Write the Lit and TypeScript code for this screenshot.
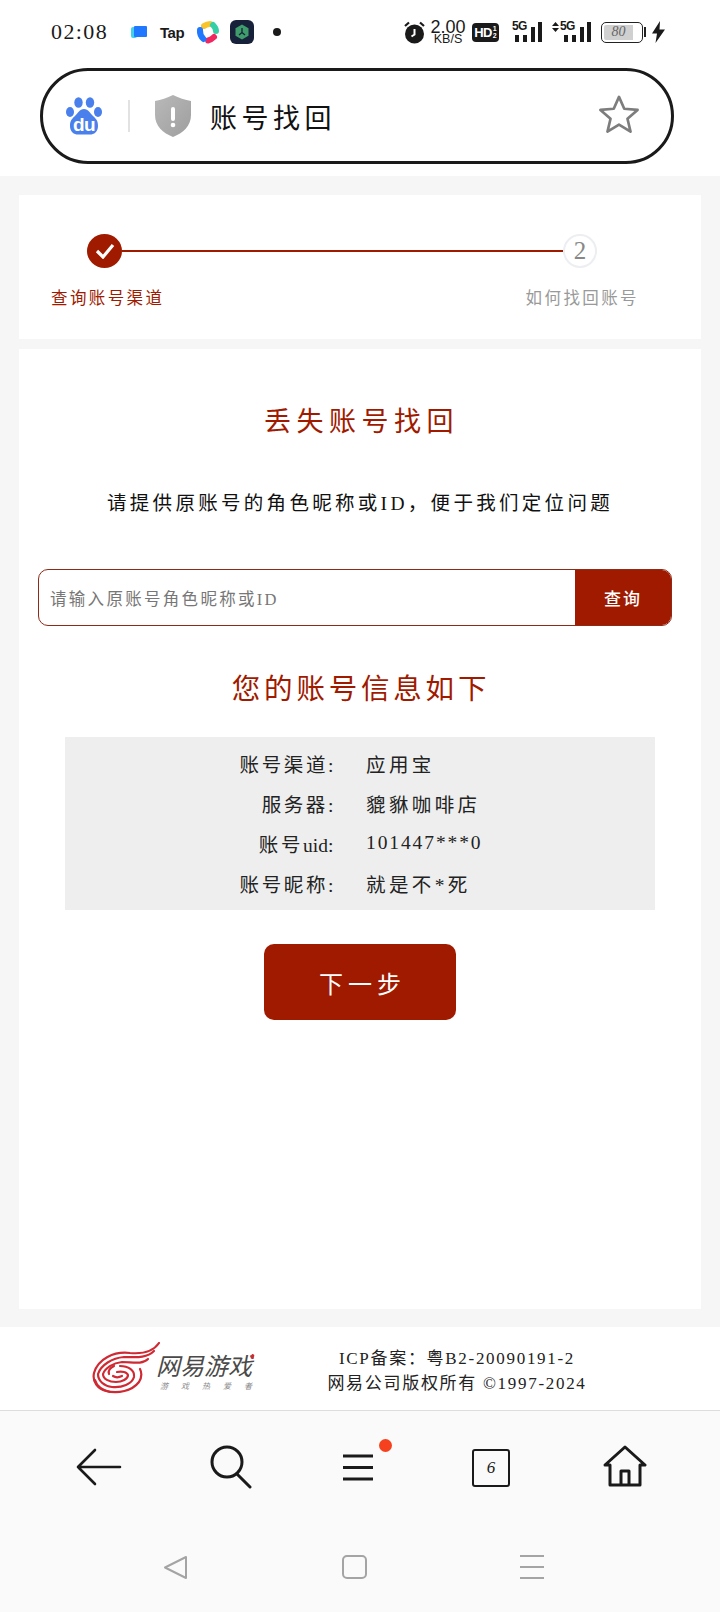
import { LitElement, html, css, svg } from "lit";
import { customElement } from "lit/decorators.js";

const swirl = svg`<svg class="swirl" width="68" height="52" viewBox="0 0 68 52" fill="none" stroke="#cf2a33" stroke-width="2.200" stroke-linecap="round">
  <path d="M67 1C61 10 50 12 38 11C22 9 6 17 2 31C0 40 6 47 14 49C26 52 40 49 47 40C50 35 50 31 48 27"/>
  <path d="M62 9C54 17 42 15 32 15C20 16 9 23 6 32C6 39 12 44 20 45C30 46 40 42 42 35C43 28 36 24 28 24"/>
  <path d="M56 17C50 23 40 20 30 20C21 21 13 26 11 32C11 37 17 40 24 40C30 40 36 37 36 33C35 30 30 29 25 30"/>
  <path d="M22 24C18 26 16 29 17 32M21 34C24 36 28 35 30 34"/>
  <path d="M3 38C5 45 10 48 18 50"/>
</svg>`;

@customElement("app-root")
export class AppRoot extends LitElement {
  static styles = css`
    :host { --red: #a01a00; display: block; width: 720px; height: 1612px; overflow: hidden; background: #f6f6f6;
      font-family: "Liberation Serif", "Noto Sans CJK SC", serif; color: #1a1a1a; }
    * { box-sizing: border-box; }
    svg { display: block; flex: none; }
    .top { background: #fff; height: 176px; display: flex; flex-direction: column; }
    .status { height: 68px; display: flex; align-items: center; padding: 0 55px 4px 51px; }
    .time { font-size: 22px; letter-spacing: 1.400px; width: 77px; }
    .apps { display: flex; align-items: center; }
    .tapt { font: 700 15px "Liberation Sans", sans-serif; letter-spacing: -0.500px; width: 24px; margin: 0 12px 0 12px; white-space: nowrap; }
    .sright { margin-left: auto; display: flex; align-items: center; }
    .speed { display: flex; flex-direction: column; align-items: center; width: 32px; font-family: "Liberation Sans", sans-serif; margin: 0 8px 0 7px; padding-top: 1px; }
    .speed b { font-weight: 400; font-size: 18px; line-height: 13px; }
    .speed i { font-style: normal; font-size: 12.500px; line-height: 10px; white-space: nowrap; }
    .hd { background: #1a1a1a; color: #fff; border-radius: 4px; width: 27px; height: 19px; display: flex; align-items: center; justify-content: center; font: 700 13px/19px "Liberation Sans", sans-serif; letter-spacing: -0.600px; margin-right: 13px; }
    .hd .st { display: flex; flex-direction: column; font-size: 7px; line-height: 7px; margin-left: 1px; letter-spacing: 0; }
    .net { display: grid; height: 22px; font: 700 12px/11px "Liberation Sans", sans-serif; letter-spacing: -0.600px; }
    .net > * { grid-area: 1 / 1; }
    .net span { align-self: start; white-space: nowrap; display: flex; align-items: center; }
    .n1 { width: 30px; }
    .n2 { width: 39px; margin-left: 10px; }
    .n2 > svg { margin-left: 9px; }
    .updown { margin-right: 1px; }
    .batt { width: 42px; height: 21px; border: 1.500px solid #222; border-radius: 5px; padding: 2px; margin-left: 10px; display: flex; }
    .batt span { background: #d0d0d0; width: 29px; font-size: 14px; line-height: 14px; text-align: center; font-style: italic; color: #666; border-radius: 2px 0 0 2px; }
    .tip { margin-left: 1px; }
    .bolt { margin-left: 6px; }

    .pill { margin: 0 46px 0 40px; height: 96px; border: 3.500px solid #1a1a1a; border-radius: 48px; display: flex; align-items: center; padding-left: 23px; background: #fff; }
    .sep { width: 2px; height: 32px; background: #e2e2e2; margin: 0 25px 0 26px; }
    .ptitle { font-size: 27px; letter-spacing: 4.500px; margin-left: 19px; flex: 1; line-height: 1; color: #111; padding-top: 6px; }
    .star { margin: 0 32px 5px 0; }

    .card { background: #fff; margin: 0 19px; }
    .steps { margin-top: 19px; height: 144px; padding: 39px 0 0 32px; }
    .track { display: flex; align-items: center; margin-left: 36px; width: 510px; }
    .dot { width: 35px; height: 34px; border-radius: 50%; background: var(--red); display: flex; align-items: center; justify-content: center; flex: none; }
    .line { flex: 1; height: 2px; background: var(--red); }
    .dot2 { width: 34px; height: 34px; border-radius: 50%; border: 2px solid #eceef1; display: flex; align-items: center; justify-content: center; color: #888; font-size: 25px; flex: none; }
    .labels { display: flex; justify-content: space-between; width: 588px; margin-top: 19px; font-size: 16.500px; letter-spacing: 2.400px; line-height: 24px; }
    .labels .a { color: var(--red); }
    .labels .b { color: #999; }

    .main { margin-top: 10px; height: 960px; padding: 0 19px; display: flex; flex-direction: column; align-items: center; }
    h1 { margin: 55px 0 0; padding-left: 3px; font-weight: 400; font-size: 27px; letter-spacing: 5.500px; line-height: 36px; color: var(--red); }
    .sub { margin-top: 46px; font-size: 19.500px; letter-spacing: 3.300px; line-height: 36px; color: #111; }
    .search { margin: 47px 10px 0 0; align-self: stretch; height: 57px; border: 1px solid #8e2a16; border-radius: 10px; overflow: hidden; display: flex; align-items: stretch; background: #fff; }
    .ph { flex: 1; display: flex; align-items: center; padding-left: 11px; color: #777; font-size: 16.500px; letter-spacing: 2.300px; }
    .go { width: 96px; background: var(--red); color: #fff; font-size: 17px; letter-spacing: 2px; display: flex; align-items: center; justify-content: center; font-weight: 500; }
    h2 { margin: 43px 0 0; padding-left: 2px; font-weight: 400; font-size: 28.500px; letter-spacing: 3.800px; line-height: 42px; color: var(--red); }
    .info { margin-top: 26px; width: 590px; height: 173px; background: #eee; padding: 6px 0; display: grid; grid-template-columns: 271px 1fr; grid-auto-rows: 40px; font-size: 19.500px; letter-spacing: 3.400px; color: #222; align-items: center; }
    .info .k { text-align: right; letter-spacing: 2.600px; }
    .info .v { padding-left: 30px; }
    .info .n { letter-spacing: 1.900px; }
    .info .lat { letter-spacing: 0; }
    .next { margin-top: 34px; width: 192px; height: 76px; border-radius: 10px; background: var(--red); color: #fff; font-size: 24px; letter-spacing: 5px; display: flex; align-items: center; justify-content: center; padding-left: 5px; }

    .foot { margin-top: 18px; height: 84px; background: #fff; border-bottom: 1px solid #ddd; display: flex; align-items: center; padding-left: 92px; }
    .logo { width: 162px; height: 54px; display: flex; align-items: flex-start; margin-top: 1px; }
    .brand { margin-left: -4px; display: flex; flex-direction: column; padding-top: 9px; position: relative; }
    .bn { font-family: "Noto Sans CJK SC", sans-serif; font-style: italic; font-weight: 400; font-size: 24px; line-height: 28px; color: #4a4a4a; white-space: nowrap; }
    .bs { font-family: "Noto Sans CJK SC", sans-serif; font-style: italic; font-size: 8px; line-height: 12px; color: #888; letter-spacing: 13px; white-space: nowrap; padding-left: 4px; margin-top: 1px; }
    .accent { position: absolute; right: 11px; top: 12px; width: 3px; height: 5px; background: #cf2a33; border-radius: 2px; transform: rotate(20deg); }
    .ftext { margin: 4px 0 0 73px; width: 260px; text-align: center; font-size: 17px; line-height: 25px; letter-spacing: 1.700px; color: #222; white-space: nowrap; }

    .nav { background: #fafafa; height: 201px; display: flex; flex-direction: column; }
    .tabs { height: 111px; display: flex; }
    .tab { position: relative; display: flex; }
    .t1 { margin: 37px 0 0 76px; }
    .t2 { margin: 34px 0 0 88px; }
    .t3 { margin: 43px 0 0 91px; }
    .t4 { margin: 38px 0 0 99px; }
    .t5 { margin: 34px 0 0 93px; }
    .badge { position: absolute; width: 13px; height: 13px; border-radius: 50%; background: #f5411e; top: -15px; right: -19px; }
    .tnum { width: 38px; height: 38px; border: 2.500px solid #1a1a1a; border-radius: 3px; display: flex; align-items: center; justify-content: center; font-size: 17px; font-style: italic; }
    .sys { display: flex; padding-top: 33px; }
    .s1 { margin-left: 163px; }
    .s2 { margin-left: 154px; width: 25px; height: 24px; border: 2px solid #a4a4a4; border-radius: 5px; }
    .s3 { margin-left: 152px; }
  `;

  render() {
    const bars = svg`<svg width="30" height="22" viewBox="0 0 30 22" fill="#1a1a1a"><rect x="3" y="14" width="4" height="7"/><rect x="11" y="14" width="4" height="7"/><rect x="19" y="6" width="4" height="15"/><rect x="26" y="1" width="4" height="20"/></svg>`;
    return html`
      <div class="top">
        <div class="status">
          <span class="time">02:08</span>
          <div class="apps">
            <svg width="20" height="24" viewBox="0 0 20 24"><rect x="3" y="7" width="6" height="11" rx="2" fill="#3fd2ea"/><rect x="6" y="6" width="13" height="11" rx="1" fill="#1f78ff"/></svg>
            <span class="tapt">Tap</span>
            <svg width="24" height="24" viewBox="0 0 24 24" fill="none" stroke-width="6" stroke-linecap="round"><path d="M8 6Q11 4 14 4" stroke="#f8c42a"/><path d="M17 5Q20 8 20 11" stroke="#35cfa5"/><path d="M18 17Q15 20 12 20.500" stroke="#f0285f"/><path d="M7.500 19Q3.500 15 4 10" stroke="#1f78ff"/></svg>
            <svg style="margin-left:10px" width="24" height="24" viewBox="0 0 24 24"><rect width="24" height="24" rx="6" fill="#17213a"/><path d="M12 4.500l6.500 3.700v7.600L12 19.500l-6.500-3.700V8.200z" fill="#3f9c6b"/><path d="M12 8v4.500l-3 2.500M12 12.500l3 2.500" stroke="#14233a" stroke-width="1.300" fill="none"/></svg>
            <svg style="margin-left:18px" width="10" height="10" viewBox="0 0 10 10"><circle cx="5" cy="5" r="4" fill="#1a1a1a"/></svg>
          </div>
          <div class="sright">
            <svg width="21" height="24" viewBox="0 0 21 24"><circle cx="10.500" cy="14" r="9.500" fill="#1a1a1a"/><path d="M10.500 9v5.500l-3 2" stroke="#fff" stroke-width="2" fill="none"/><path d="M1 6l4-3.500M20 6l-4-3.500" stroke="#1a1a1a" stroke-width="2.200"/></svg>
            <div class="speed"><b>2.00</b><i>KB/S</i></div>
            <div class="hd">HD<span class="st"><span>1</span><span>2</span></span></div>
            <div class="net n1">${bars}<span>5G</span></div>
            <div class="net n2">${bars}<span><svg class="updown" width="7" height="10" viewBox="0 0 7 10" fill="#1a1a1a"><path d="M3.500 0L7 4H0zM0 6h7l-3.500 4z"/></svg>5G</span></div>
            <div class="batt"><span>80</span></div>
            <svg class="tip" width="2" height="10"><rect width="2" height="10" fill="#222"/></svg>
            <svg class="bolt" width="13" height="22" viewBox="0 0 13 22"><path d="M8 0L0 12.500h5L3.500 22 13 8.500H7.500z" fill="#1a1a1a"/></svg>
          </div>
        </div>
        <div class="pill">
          <svg width="36" height="38" viewBox="0 0 36 38" fill="#4a80ec"><ellipse cx="4" cy="15" rx="4" ry="5"/><ellipse cx="12.500" cy="5.500" rx="4.200" ry="5.300"/><ellipse cx="24" cy="5.500" rx="4.200" ry="5.300"/><ellipse cx="32" cy="15" rx="4" ry="5"/><path d="M18 12c4.500 0 6 4 9 7 3.500 3 5 5 5 10 0 6-4 8.500-8 8.500H12c-4 0-8-2.500-8-8.500 0-5 1.500-7 5-10 3-3 4.500-7 9-7z"/><text x="18" y="34" text-anchor="middle" fill="#fff" font-family="Liberation Sans, sans-serif" font-weight="700" font-size="19" letter-spacing="-0.500">du</text></svg>
          <div class="sep"></div>
          <svg width="36" height="42" viewBox="0 0 36 42"><defs><linearGradient id="g" x1="0" y1="0" x2="1" y2="1"><stop offset="0" stop-color="#b9b9b9"/><stop offset="1" stop-color="#9e9e9e"/></linearGradient></defs><path d="M18 0c6 3 12 5 18 6v14c0 11-8 18-18 22C8 38 0 31 0 20V6C6 5 12 3 18 0z" fill="url(#g)"/><rect x="16" y="12" width="4" height="14" rx="2" fill="#fff"/><circle cx="18" cy="30" r="2.300" fill="#fff"/></svg>
          <div class="ptitle">账号找回</div>
          <svg class="star" width="40" height="40" viewBox="0 0 42 42"><path d="M21 3l5.500 12.500 14 1.200-10.600 9.300 3.200 13.500L21 32.200 8.900 39.500l3.200-13.500L1.500 16.700l14-1.200z" fill="none" stroke="#7d7d7d" stroke-width="2.800" stroke-linejoin="round"/></svg>
        </div>
      </div>

      <div class="card steps">
        <div class="track">
          <div class="dot"><svg width="20" height="16" viewBox="0 0 20 16"><path d="M2 8l6 6L18 2" fill="none" stroke="#fff" stroke-width="3.200"/></svg></div>
          <div class="line"></div>
          <div class="dot2">2</div>
        </div>
        <div class="labels"><span class="a">查询账号渠道</span><span class="b">如何找回账号</span></div>
      </div>

      <div class="card main">
        <h1>丢失账号找回</h1>
        <div class="sub">请提供原账号的角色昵称或ID，便于我们定位问题</div>
        <div class="search"><div class="ph">请输入原账号角色昵称或ID</div><div class="go">查询</div></div>
        <h2>您的账号信息如下</h2>
        <div class="info">
          <div class="k">账号渠道:</div><div class="v">应用宝</div>
          <div class="k">服务器:</div><div class="v">貔貅咖啡店</div>
          <div class="k">账号<span class="lat">uid</span>:</div><div class="v n">101447***0</div>
          <div class="k">账号昵称:</div><div class="v">就是不*死</div>
        </div>
        <div class="next">下一步</div>
      </div>

      <div class="foot">
        <div class="logo">${swirl}<div class="brand"><span class="bn">网易游戏</span><span class="bs">游戏热爱者</span><span class="accent"></span></div></div>
        <div class="ftext">ICP备案：粤B2-20090191-2<br>网易公司版权所有 ©1997-2024</div>
      </div>

      <div class="nav">
        <div class="tabs">
          <div class="tab t1"><svg width="46" height="38" viewBox="0 0 46 38" fill="none" stroke="#1a1a1a" stroke-width="2.600" stroke-linecap="round" stroke-linejoin="round"><path d="M19 2L2 19l17 17M2 19h42"/></svg></div>
          <div class="tab t2"><svg width="42" height="44" viewBox="0 0 42 44" fill="none" stroke="#1a1a1a" stroke-width="3" stroke-linecap="round"><circle cx="17" cy="17" r="15"/><path d="M27 29l13 13"/></svg></div>
          <div class="tab t3"><svg width="30" height="27" viewBox="0 0 30 27" fill="none" stroke="#1a1a1a" stroke-width="3"><path d="M0 2h30M0 13.500h30M0 25h30"/></svg><span class="badge"></span></div>
          <div class="tab t4"><div class="tnum">6</div></div>
          <div class="tab t5"><svg width="44" height="42" viewBox="0 0 44 42" fill="none" stroke="#1a1a1a" stroke-width="3" stroke-linejoin="round" stroke-linecap="round"><path d="M2 20L22 2l20 18h-5v20H7V20zM18 40V26h8v14"/></svg></div>
        </div>
        <div class="sys">
          <svg class="s1" width="25" height="25" viewBox="0 0 25 25" fill="none" stroke="#a4a4a4" stroke-width="2" stroke-linejoin="round"><path d="M23 2v21L2 12.500z"/></svg>
          <div class="s2"></div>
          <svg class="s3" width="26" height="24" viewBox="0 0 26 24" fill="none" stroke="#a4a4a4" stroke-width="2"><path d="M1 1h24M1 12h24M1 23h24"/></svg>
        </div>
      </div>
    `;
  }
}
